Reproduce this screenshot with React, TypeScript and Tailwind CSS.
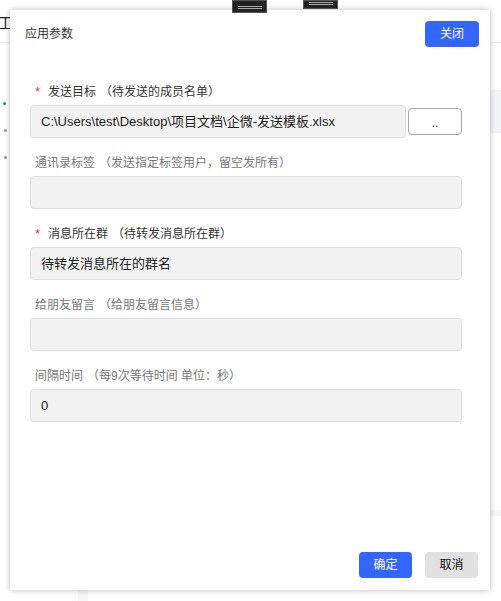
const font = { fontFamily: '"Liberation Sans", "Noto Sans CJK SC", sans-serif' }

function Field({ label, hint, required, value }: { label: string; hint: string; required?: boolean; value?: string }) {
  return (
    <div className="flex flex-col">
      <div className={`flex h-[18px] items-center pl-[5px] text-[12px] ${required ? 'text-[#333]' : 'text-[#777]'}`}>
        {required && <span className="mr-[8px] text-[13px] text-[#ff2a2a]">*</span>}
        <span>{label}</span>
        <span className="ml-[4px]">（{hint}）</span>
      </div>
      <div className="mt-[4px] flex h-[33px] items-center rounded-[4px] border border-[#dedede] bg-[#f2f2f2] pl-[10px] text-[13px] text-[#222]">
        {value}
      </div>
    </div>
  )
}

export default function App() {
  return (
    <div className="relative h-[601px] w-[501px] overflow-hidden bg-white" style={font}>
      {/* page behind the dialog */}
      <div className="absolute left-0 right-0 top-0 h-[43px] border-b border-[#ececec]">
        <span className="absolute left-[-2px] top-[12px] text-[15px] text-[#222]">工</span>
      </div>
      <div className="absolute right-0 top-[90px] h-[43px] w-[12px] bg-[#f3f4f8]" />
      <div className="absolute right-0 top-[510px] h-[6px] w-[12px] bg-[#f6f6f6]" />
      <div className="absolute bottom-0 left-[78px] h-[11px] w-[10px] bg-[#f6f6f6]" />
      <div className="absolute left-[3px] top-[102px] h-[3px] w-[3px] rounded-full bg-[#2a9a3a]" />
      <div className="absolute left-[4px] top-[129px] h-[3px] w-[3px] rounded-full bg-[#999]" />
      <div className="absolute left-[4px] top-[156px] h-[3px] w-[3px] rounded-full bg-[#999]" />

      {/* dialog */}
      <div className="absolute left-[10px] top-[10px] flex h-[580px] w-[480px] flex-col bg-white shadow-[0_0_6px_rgba(0,0,0,0.28)]">
        <div className="flex items-center justify-between pl-[15px] pr-[11px] pt-[11px]">
          <span className="text-[12px] text-[#333]">应用参数</span>
          <button className="h-[26px] w-[54px] rounded-[4px] bg-[#3366ff] text-[12px] text-white">关闭</button>
        </div>

        <div className="ml-[20px] mr-[28px] mt-[36px] flex flex-col gap-[16px]">
          <div className="flex flex-col">
            <div className="flex h-[18px] items-center pl-[5px] text-[12px] text-[#333]">
              <span className="mr-[8px] text-[13px] text-[#ff2a2a]">*</span>
              <span>发送目标</span>
              <span className="ml-[4px]">（待发送的成员名单）</span>
            </div>
            <div className="mt-[4px] flex items-center gap-[2px]">
              <div className="flex h-[33px] flex-1 items-center rounded-[4px] border border-[#dedede] bg-[#f2f2f2] pl-[10px] text-[13px] text-[#222]">
                C:\Users\test\Desktop\项目文档\企微-发送模板.xlsx
              </div>
              <button className="h-[27px] w-[54px] rounded-[4px] border border-[#a8a8a8] bg-white pt-[2px] text-[12px] text-[#333]">..</button>
            </div>
          </div>
          <Field label="通讯录标签" hint="发送指定标签用户，留空发所有" />
          <Field label="消息所在群" hint="待转发消息所在群" required value="待转发消息所在的群名" />
          <Field label="给朋友留言" hint="给朋友留言信息" />
          <Field label="间隔时间" hint="每9次等待时间 单位：秒" value="0" />
        </div>

        <div className="mb-[12px] mr-[12px] mt-auto flex justify-end gap-[13px]">
          <button className="h-[26px] w-[53px] rounded-[4px] bg-[#3366ff] text-[12px] text-white">确定</button>
          <button className="h-[26px] w-[53px] rounded-[4px] bg-[#e1e1e1] text-[12px] text-[#111]">取消</button>
        </div>
      </div>

      {/* handles over the top edge */}
      <div className="absolute left-[232px] top-0 flex h-[13px] w-[35px] flex-col items-center justify-end gap-[1px] border border-[#555] bg-[#222] pb-[3px]">
        <div className="h-px w-[24px] bg-[#aaa]" />
        <div className="h-px w-[24px] bg-[#aaa]" />
      </div>
      <div className="absolute left-[303px] top-0 flex h-[9px] w-[35px] flex-col items-center justify-end gap-[1px] border border-[#555] bg-[#222] pb-[3px]">
        <div className="h-px w-[24px] bg-[#aaa]" />
        <div className="h-px w-[24px] bg-[#aaa]" />
      </div>
    </div>
  )
}
